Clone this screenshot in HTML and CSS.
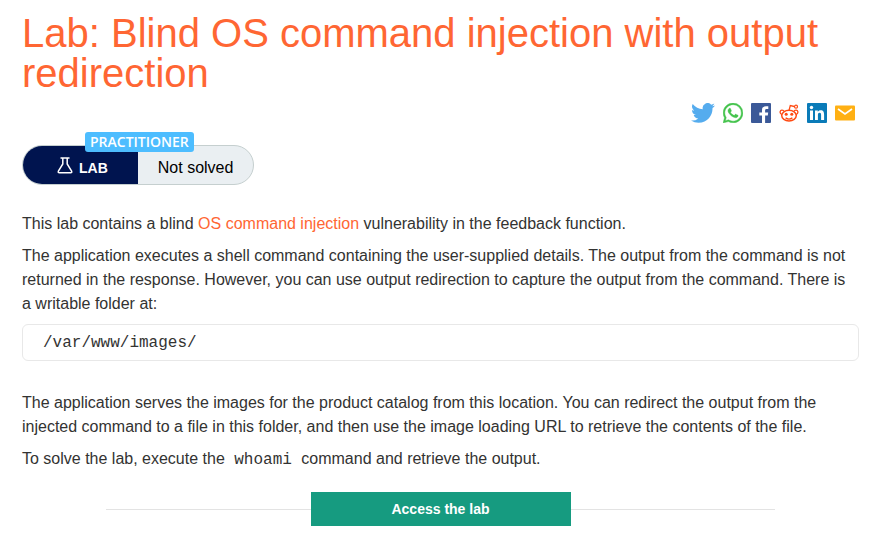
FILE: index.html
```html
<!DOCTYPE html>
<html lang="en">
<head>
<meta charset="utf-8">
<meta name="viewport" content="width=device-width, initial-scale=1">
<title>Lab: Blind OS command injection with output redirection</title>
<link rel="stylesheet" href="styles.css">
</head>
<body>
<main class="page">
  <h1 class="title">Lab: Blind OS command injection with output redirection</h1>

  <nav class="share" aria-label="Share">
    <a class="share-link share-twitter" href="#" aria-label="Twitter">
      <svg viewBox="0 0 24 20" aria-hidden="true"><path fill="#55acee" d="M24 2.400a9.800 9.800 0 0 1-2.800.8A4.900 4.900 0 0 0 23.300.5a9.900 9.900 0 0 1-3.100 1.200 4.900 4.900 0 0 0-8.400 4.500A14 14 0 0 1 1.700 1a4.900 4.900 0 0 0 1.500 6.600A4.900 4.900 0 0 1 1 7v.1a4.900 4.900 0 0 0 3.900 4.800 4.900 4.900 0 0 1-2.200.1 4.900 4.900 0 0 0 4.600 3.400A9.900 9.900 0 0 1 0 17.500 14 14 0 0 0 7.500 19.700c9.100 0 14-7.500 14-14V5A10 10 0 0 0 24 2.400z"/></svg>
    </a>
    <a class="share-link" href="#" aria-label="WhatsApp">
      <svg viewBox="0 0 24 24" aria-hidden="true"><path fill="#43c34c" stroke="#43c34c" stroke-width=".5" d="M17.472 14.382c-.297-.149-1.758-.867-2.030-.967-.273-.099-.471-.148-.670.150-.197.297-.767.966-.940 1.164-.173.199-.347.223-.644.075-.297-.150-1.255-.463-2.390-1.475-.883-.788-1.480-1.761-1.653-2.059-.173-.297-.018-.458.130-.606.134-.133.298-.347.446-.520.149-.174.198-.298.298-.497.099-.198.050-.371-.025-.520-.075-.149-.669-1.612-.916-2.207-.242-.579-.487-.500-.669-.510-.173-.008-.371-.010-.570-.010-.198 0-.520.074-.792.372-.272.297-1.040 1.016-1.040 2.479 0 1.462 1.065 2.875 1.213 3.074.149.198 2.096 3.200 5.077 4.487.709.306 1.262.489 1.694.625.712.227 1.360.195 1.871.118.571-.085 1.758-.719 2.006-1.413.248-.694.248-1.289.173-1.413-.074-.124-.272-.198-.570-.347M12.050 21.785a9.870 9.870 0 0 1-5.031-1.378l-.361-.214-3.741.982.998-3.648-.235-.374a9.860 9.860 0 0 1-1.510-5.260c.001-5.450 4.436-9.884 9.888-9.884a9.825 9.825 0 0 1 9.880 9.893c-.003 5.450-4.437 9.884-9.885 9.884M20.460 3.488A11.815 11.815 0 0 0 12.050 0C5.495 0 .160 5.335.157 11.892c0 2.096.547 4.142 1.588 5.945L.057 24l6.305-1.654a11.882 11.882 0 0 0 5.683 1.448c6.554 0 11.890-5.335 11.893-11.893a11.821 11.821 0 0 0-3.480-8.413z"/></svg>
    </a>
    <a class="share-link" href="#" aria-label="Facebook">
      <svg viewBox="0 0 20 20" aria-hidden="true"><rect width="20" height="20" rx="1" fill="#3b5998"/><path fill="#fff" d="M11 20v-7.500H8.300V9.600H11V7.200c0-2.700 1.600-4 4-4 1.100 0 2.100.1 2.300.1v2.700h-1.600c-1.300 0-1.600.6-1.600 1.500v2.100h3.100l-.4 2.900h-2.700V20z"/></svg>
    </a>
    <a class="share-link" href="#" aria-label="Reddit">
      <svg viewBox="0 0 20 20" aria-hidden="true" fill="none" stroke="#ff4a12"><ellipse cx="10" cy="12.600" rx="7.300" ry="5.400" stroke-width="1.500"/><path stroke-width="1.300" d="M2.900 11.600C-.2 10 1.200 6.700 3.400 7.200q1 .2 1.500 1M17.100 11.600c3.100-1.600 1.700-4.900-.5-4.400q-1 .2-1.500 1M10.100 7.200 11.300 2.600l4 .9M6.600 14.900q3.400 2.300 6.800 0"/><circle cx="17" cy="3.700" r="1.500" stroke-width="1.200"/><g fill="#ff4a12" stroke="none"><circle cx="7.200" cy="11.300" r="1.500"/><circle cx="12.800" cy="11.300" r="1.500"/></g></svg>
    </a>
    <a class="share-link" href="#" aria-label="LinkedIn">
      <svg viewBox="0 0 20 20" aria-hidden="true"><rect width="20" height="20" rx="1" fill="#0a7bb8"/><path fill="#fff" d="M3 7.600h3V17H3zM8 7.600h2.800v1.300c.5-.9 1.500-1.600 2.900-1.600 2.800 0 3.400 1.900 3.400 4.400V17h-3v-4.700c0-1.200-.1-2.500-1.500-2.500-1.500 0-1.700 1.200-1.700 2.400V17H8z"/><circle cx="4.500" cy="4.500" r="1.700" fill="#fff"/></svg>
    </a>
    <a class="share-link" href="#" aria-label="Email">
      <svg viewBox="0 0 20 20" aria-hidden="true"><rect y="2.500" width="20" height="15" rx="1" fill="#ffb013"/><path d="m3 6 7 5 7-5" fill="none" stroke="#fff" stroke-width="1.700"/></svg>
    </a>
  </nav>

  <div class="status">
    <span class="status-level">PRACTITIONER</span>
    <span class="status-lab">
      <svg class="flask" viewBox="0 0 16 17" aria-hidden="true"><path d="M3.500 1h9M5.800 1v6L1.400 14.200q-.7 1.500 1 1.500h11.200q1.700 0 1-1.500L10.200 7V1" fill="none" stroke="#fff" stroke-width="1.500"/></svg>
      LAB
    </span>
    <span class="status-state">Not solved</span>
  </div>

  <p>This lab contains a blind <a class="link" href="#">OS command injection</a> vulnerability in the feedback function.</p>
  <p>The application executes a shell command containing the user-supplied details. The output from the command is not returned in the response. However, you can use output redirection to capture the output from the command. There is a writable folder at:</p>
  <pre class="code-block"><code>/var/www/images/</code></pre>
  <p>The application serves the images for the product catalog from this location. You can redirect the output from the injected command to a file in this folder, and then use the image loading URL to retrieve the contents of the file.</p>
  <p>To solve the lab, execute the <code class="code-inline">whoami</code> command and retrieve the output.</p>

  <div class="access">
    <a class="access-button" href="#">Access the lab</a>
  </div>
</main>
</body>
</html>
```
FILE: styles.css
```css
* {
  box-sizing: border-box;
}

body {
  margin: 0;
  background: #fff;
  color: #333332;
  font: 16px/24px "Liberation Sans", Arial, sans-serif;
}

.page {
  padding: 13px 24px 7px 22px;
}

.title {
  margin: 0;
  color: #ff6633;
  font-size: 40px;
  font-weight: 400;
  line-height: 40px;
}

.share {
  display: flex;
  justify-content: flex-end;
  gap: 8px;
  margin: 10px 4px 22px 0;
}

.share-link {
  width: 20px;
  height: 20px;
}

.share-twitter {
  width: 24px;
}

.share-link svg {
  display: block;
  width: 100%;
  height: 100%;
}

.status {
  position: relative;
  display: flex;
  width: max-content;
  height: 40px;
  margin-bottom: 27px;
  border: 1px solid #c5cfcf;
  border-radius: 20px;
  background: #eaeff2;
  color: #000;
}

.status-lab {
  display: flex;
  align-items: center;
  gap: 6px;
  padding: 5px 30px 0 34px;
  border-radius: 19px 0 0 19px;
  background: #00144f;
  color: #fff;
  font-size: 14px;
  font-weight: 700;
}

.flask {
  width: 16px;
  height: 17px;
  margin-top: -5px;
}

.status-state {
  padding: 10px 20px 0;
}

.status-level {
  position: absolute;
  top: -14px;
  left: 62px;
  padding: 0 5px;
  border-radius: 3px;
  background: #4dbdff;
  color: #fff;
  font: 600 13px/20px "Open Sans", "Noto Sans", sans-serif;
  font-size: 14px;
}

p {
  margin: 0 0 8px;
  padding-right: 8px;
}

.link {
  color: #ff6633;
  text-decoration: none;
}

code {
  font-family: "Liberation Mono", "Courier New", monospace;
  font-size: 16px;
}

.code-block {
  margin: 0 0 30px;
  padding: 5px 20px;
  border: 1px solid #e8e8e8;
  border-radius: 6px;
  line-height: 24px;
}

.code-inline {
  padding: 0 5px;
}

.access {
  display: flex;
  align-items: center;
  width: 80%;
  margin: 20px auto 0;
}

.access::before,
.access::after {
  content: "";
  flex: 1;
  border-top: 1px solid #e3e3e3;
}

.access-button {
  width: 260px;
  padding: 5px;
  background: #169b80;
  color: #fff;
  font-size: 14px;
  font-weight: 700;
  text-align: center;
  text-decoration: none;
}
```
